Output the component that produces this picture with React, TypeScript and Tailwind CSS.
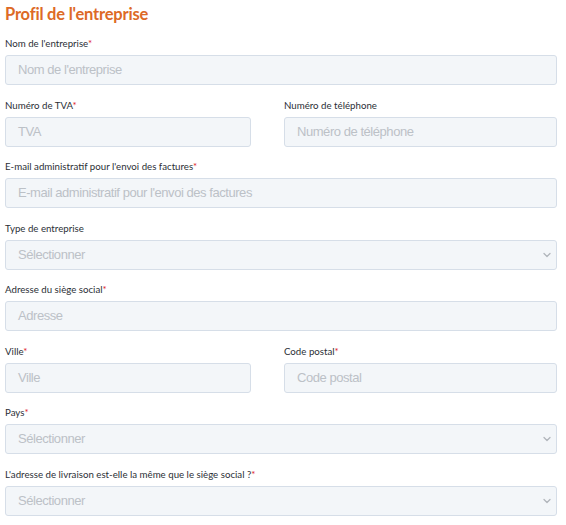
import { ChevronDown } from "lucide-react";

type Field = {
    label: string;
    placeholder: string;
    required?: boolean;
    select?: boolean;
};

function Label({ label, required }: { label: string; required?: boolean }) {
    return (
        <label className="mb-[4px] block h-[16px] text-[9.7px] leading-[16px] text-[#2b2f36] [font-family:Lato,'Noto_Sans',sans-serif]">
            {label}
            {required && <span className="text-[#e0262b]">*</span>}
        </label>
    );
}

function Input({ label, placeholder, required, select }: Field) {
    return (
        <div>
            <Label label={label} required={required} />
            <div className="flex h-[30px] items-center justify-between rounded-[3px] border border-[#d6dee8] bg-[#f3f6f9] pl-[12px] pr-[3px]">
                <span className="text-[13px] tracking-[-0.45px] text-[#bcc1c7] [font-family:'Liberation_Sans',Arial,sans-serif]">
                    {placeholder}
                </span>
                {select && <ChevronDown className="h-[12px] w-[12px] text-[#b0b5bb]" strokeWidth={2.5} />}
            </div>
        </div>
    );
}

export default function App() {
    return (
        <div className="min-h-screen bg-white px-[5px] pt-[2px]">
            <h1 className="mb-[9px] text-[16.5px] font-bold leading-[24px] tracking-[-0.2px] text-[#dd6a26] [font-family:Lato,sans-serif]">
                Profil de l'entreprise
            </h1>
            <div className="flex w-[552px] flex-col gap-[11.5px]">
                <Input label="Nom de l'entreprise" placeholder="Nom de l'entreprise" required />
                <div className="grid grid-cols-[246px_1fr] gap-x-[33px]">
                    <Input label="Numéro de TVA" placeholder="TVA" required />
                    <Input label="Numéro de téléphone" placeholder="Numéro de téléphone" />
                </div>
                <Input
                    label="E-mail administratif pour l'envoi des factures"
                    placeholder="E-mail administratif pour l'envoi des factures"
                    required
                />
                <Input label="Type de entreprise" placeholder="Sélectionner" select />
                <Input label="Adresse du siège social" placeholder="Adresse" required />
                <div className="grid grid-cols-[246px_1fr] gap-x-[33px]">
                    <Input label="Ville" placeholder="Ville" required />
                    <Input label="Code postal" placeholder="Code postal" required />
                </div>
                <Input label="Pays" placeholder="Sélectionner" required select />
                <Input
                    label="L'adresse de livraison est-elle la même que le siège social ?"
                    placeholder="Sélectionner"
                    required
                    select
                />
            </div>
        </div>
    );
}
